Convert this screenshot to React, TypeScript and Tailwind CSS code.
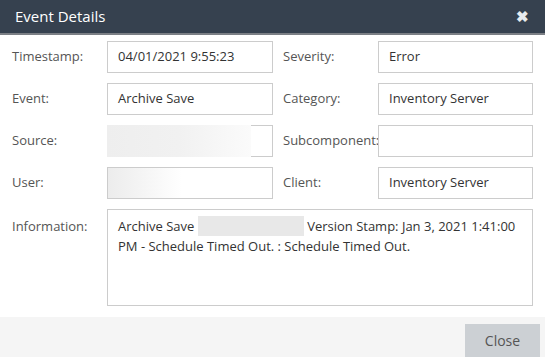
import React from 'react';

const font = { fontFamily: '"Open Sans", "Noto Sans", sans-serif' };

const Field: React.FC<{ label: string; value?: string; redact?: 'source' | 'user' }> = ({ label, value, redact }) => (
  <>
    <div className="flex items-center h-8 text-[13px] text-[#555]">{label}</div>
    <div className="relative h-8 border border-[#ccc] bg-white flex items-center px-[10px] text-[13px] text-[#333]">
      {value}
      {redact === 'source' && (
        <div className="absolute -left-px -top-px -bottom-px w-[144px] bg-gradient-to-r from-[#eeeeee] via-[#f1f1f1] to-[#fbfbfb]" />
      )}
      {redact === 'user' && (
        <div className="absolute left-0 top-0 bottom-0 w-[74px] bg-gradient-to-r from-[#ececec] to-white" />
      )}
    </div>
  </>
);

export default function App() {
  return (
    <div className="w-[545px] h-[357px] bg-white flex flex-col overflow-hidden" style={font}>
      {/* Header */}
      <div className="h-[35px] bg-[#36414f] border-b-2 border-[#7b7f85] flex items-center justify-between pl-[15px] pr-[16px]">
        <span className="text-white text-[15px]">Event Details</span>
        <span className="text-[#e8ebee] text-[15px] font-bold leading-none">✖</span>
      </div>

      {/* Body */}
      <div className="flex-1 pt-[6px] px-3">
        <div className="grid grid-cols-[95px_166px_10px_95px_155px] gap-y-[10px]">
          <Field label="Timestamp:" value="04/01/2021 9:55:23" />
          <div />
          <Field label="Severity:" value="Error" />

          <Field label="Event:" value="Archive Save" />
          <div />
          <Field label="Category:" value="Inventory Server" />

          <Field label="Source:" redact="source" />
          <div />
          <Field label="Subcomponent:" />

          <Field label="User:" redact="user" />
          <div />
          <Field label="Client:" value="Inventory Server" />

          <div className="text-[13px] text-[#555] pt-[8px]">Information:</div>
          <div className="col-span-4 h-[97px] border border-[#ccc] px-[10px] pt-[6px] text-[13px] leading-[20px] text-[#333]">
            Archive Save{' '}
            <span className="inline-block align-top w-[106px] h-[20px] bg-[#e8e8e8]" />
            {' '}Version Stamp: Jan 3, 2021 1:41:00 PM - Schedule Timed Out. : Schedule Timed Out.
          </div>
        </div>
      </div>

      {/* Footer */}
      <div className="h-[40px] bg-[#f5f5f5] flex items-end justify-end pr-[5px]">
        <button className="w-[75px] h-[33px] bg-[#ccd0d4] text-[#555] text-[14px]">Close</button>
      </div>
    </div>
  );
}
